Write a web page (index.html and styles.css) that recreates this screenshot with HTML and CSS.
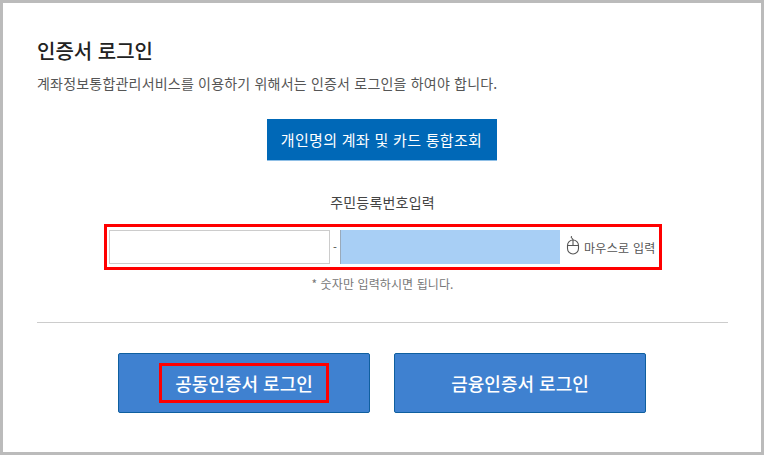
FILE: index.html
```html
<!DOCTYPE html>
<html lang="ko">
<head>
<meta charset="utf-8">
<title>인증서 로그인</title>
<link rel="stylesheet" href="styles.css">
</head>
<body>
<main class="frame">
  <h1 class="title">인증서 로그인</h1>
  <p class="desc">계좌정보통합관리서비스를 이용하기 위해서는 인증서 로그인을 하여야 합니다.</p>
  <div class="center-row"><button class="lookup">개인명의 계좌 및 카드 통합조회</button></div>
  <div class="label">주민등록번호입력</div>
  <div class="highlight">
    <div class="input-plain"></div>
    <span class="dash">-</span>
    <div class="input-blue"></div>
    <svg class="mouse" width="14" height="19" viewBox="0 0 14 19" fill="none" stroke="#555" stroke-width="1.1">
      <rect x="1.5" y="4" width="11" height="14" rx="5.5"/>
      <path d="M1.8 9.5H12.2M7 4V9.5M7 4C7 2.5 6 2.5 5.5 1.8 5 1 5.5 .6 6 .5"/>
    </svg>
    <span class="mouse-text">마우스로 입력</span>
  </div>
  <p class="hint">* 숫자만 입력하시면 됩니다.</p>
  <hr class="rule">
  <div class="actions">
    <button class="cert"><span class="cert-mark">공동인증서 로그인</span></button>
    <button class="cert">금융인증서 로그인</button>
  </div>
</main>
</body>
</html>
```
FILE: styles.css
```css
* { box-sizing: border-box; }
html, body { margin: 0; padding: 0; background: #fff; }
body { font-family: "Noto Sans CJK KR", "Noto Sans", sans-serif; }
.frame {
  width: 764px;
  height: 455px;
  border: 3px solid #bbb;
  padding: 35px 33px 0 34px;
  display: flex;
  flex-direction: column;
  overflow: hidden;
}
.title {
  margin: 0;
  font-size: 20px;
  line-height: 26px;
  font-weight: 500;
  color: #222;
}
.desc {
  margin: 10px 0 0;
  font-size: 14px;
  line-height: 19px;
  letter-spacing: 0.2px;
  color: #555;
}
.center-row { display: flex; justify-content: center; margin: 26px 2px 0 0; }
.lookup {
  width: 230px;
  height: 42px;
  border: 0;
  border-bottom: 1px solid #8fbfe6;
  background: #0068b7;
  color: #fff;
  font: 15px/20px "Noto Sans CJK KR", sans-serif;
  letter-spacing: 0.3px;
  padding: 0;
}
.label {
  margin-top: 31px;
  text-align: center;
  font-size: 14px;
  line-height: 20px;
  letter-spacing: 0.2px;
  color: #444;
}
.highlight {
  margin: 12px 0 0 67px;
  width: 558px;
  height: 46px;
  border: 3px solid #f00;
  padding-left: 2px;
  display: flex;
  align-items: center;
}
.input-plain {
  width: 221px;
  height: 34px;
  border: 1px solid #ccc;
  background: #fff;
}
.dash {
  width: 10px;
  text-align: center;
  font-size: 11px;
  color: #444;
}
.input-blue {
  width: 220px;
  height: 34px;
  background: #a8cff5;
  border-left: 1px solid #9ab;
}
.mouse { margin: 0 0 4px 6px; }
.mouse-text {
  margin-left: 4px;
  font-size: 12px;
  letter-spacing: 0.3px;
  color: #555;
  white-space: nowrap;
}
.hint {
  margin: 5px 0 0;
  text-align: center;
  font-size: 12px;
  line-height: 18px;
  letter-spacing: 0.1px;
  color: #777;
}
.rule {
  margin: 29px 0 0;
  width: 691px;
  border: 0;
  border-top: 1px solid #ccc;
}
.actions {
  margin: 30px 0 0 81px;
  display: flex;
  gap: 24px;
}
.cert {
  width: 252px;
  height: 60px;
  border: 1px solid #0f5f9f;
  border-radius: 2px;
  background: #3f81d0;
  color: #fff;
  font: 500 18px/24px "Noto Sans CJK KR", sans-serif;
  padding: 0;
  display: flex;
  align-items: center;
  justify-content: center;
}
.cert-mark {
  width: 170px;
  height: 40px;
  border: 3px solid #f00;
  display: flex;
  align-items: center;
  justify-content: center;
}
```
